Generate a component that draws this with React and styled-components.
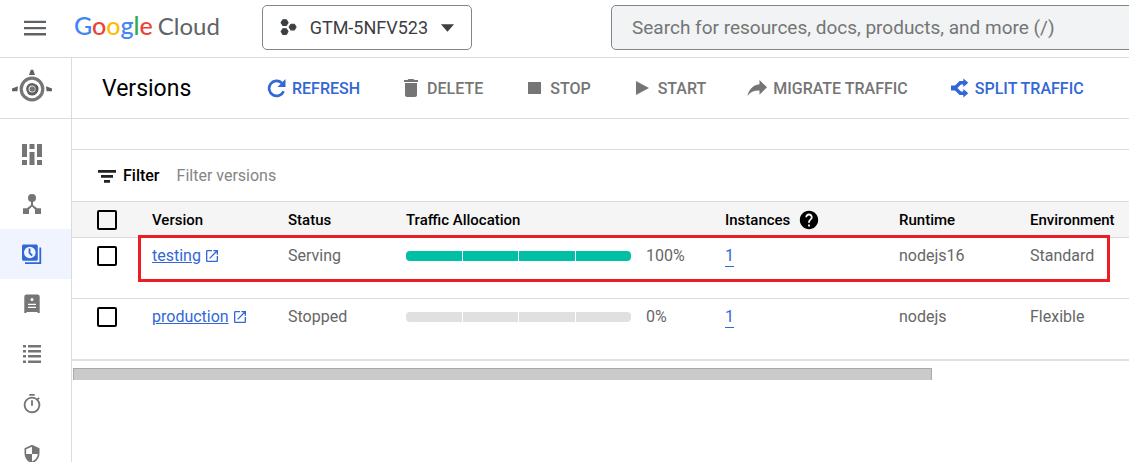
import React, { useState } from "react";
import styled, { createGlobalStyle } from "styled-components";
import {
  MdDelete,
  MdHelp,
  MdOpenInNew,
  MdOutlineTimer,
  MdSecurity,
} from "react-icons/md";

const GlobalStyle = createGlobalStyle`
  * {
    box-sizing: border-box;
  }
  body {
    margin: 0;
    background: #fff;
    font-family: Roboto, "Liberation Sans", sans-serif;
    font-size: 16px;
    color: #000;
  }
  button, input {
    font-family: inherit;
  }
`;

const Page = styled.div`
  display: flex;
  flex-direction: column;
  height: 100vh;
  overflow: hidden;
`;

const Header = styled.header`
  display: flex;
  flex: none;
  align-items: center;
  height: 58px;
  padding: 0 0 2px 23px;
  border-bottom: 1px solid #dadce0;
`;

const MenuButton = styled.button`
  display: flex;
  flex: none;
  padding: 0;
  border: 0;
  background: none;
  color: #5f6368;
  cursor: pointer;
`;

const Logo = styled.a`
  display: flex;
  flex: none;
  align-items: baseline;
  gap: 5px;
  width: 215px;
  padding: 0 0 4px 27px;
  font-family: Lato, Roboto, sans-serif;
  font-size: 24px;
  line-height: 32px;
  color: #5f6368;
  text-decoration: none;
`;

const Brand = styled.span`
  font-size: 25px;
  font-weight: 500;
`;

const Letter = styled.span`
  color: ${(props) => props.$color};
`;

const ProjectButton = styled.button`
  display: flex;
  flex: none;
  align-items: center;
  gap: 12px;
  width: 210px;
  height: 45px;
  padding: 0 16px;
  border: 1px solid #80868b;
  border-radius: 5px;
  background: #fff;
  font-size: 18px;
  color: #3c4043;
  white-space: nowrap;
  cursor: pointer;
`;

const SearchInput = styled.input`
  flex: 1 0 600px;
  height: 45px;
  margin-left: 139px;
  padding: 0 20px;
  border: 1px solid #80868b;
  border-radius: 5px;
  background: #f1f3f4;
  font-size: 19px;
  &::placeholder {
    color: #757575;
    opacity: 1;
  }
`;

const Body = styled.div`
  display: flex;
  flex: 1;
  min-height: 0;
`;

const Sidebar = styled.nav`
  display: flex;
  flex: none;
  flex-direction: column;
  width: 72px;
  overflow: hidden;
  border-right: 1px solid #dadce0;
`;

const Product = styled.div`
  display: flex;
  flex: none;
  align-items: center;
  justify-content: center;
  height: 61px;
  margin-bottom: 10px;
  padding: 2px 7px 0 0;
  border-bottom: 1px solid #dadce0;
`;

const NavLink = styled.a`
  display: flex;
  flex: none;
  align-items: center;
  justify-content: center;
  height: 50px;
  padding-right: 7px;
  background: ${(props) => (props.$active ? "#f0f4ff" : "transparent")};
  color: ${(props) => (props.$active ? "#3367d6" : "#757575")};
`;

const Main = styled.main`
  flex: 1;
  min-width: 0;
  overflow: hidden;
`;

const Toolbar = styled.div`
  display: flex;
  align-items: center;
  gap: 41px;
  height: 61px;
  padding-left: 30px;
  border-bottom: 1px solid #dadce0;
  white-space: nowrap;
`;

const Title = styled.h1`
  margin: 0;
  width: 123px;
  font-size: 23px;
  font-weight: 400;
`;

const ToolButton = styled.button`
  display: flex;
  align-items: center;
  gap: 6px;
  padding: 0;
  border: 0;
  background: none;
  font-size: 16px;
  font-weight: 500;
  color: ${(props) => (props.$primary ? "#3367d6" : "#757575")};
  cursor: pointer;
`;

const FilterBar = styled.div`
  display: flex;
  align-items: center;
  height: 52px;
  margin-top: 30px;
  padding-left: 25px;
  border-top: 1px solid #dadce0;
`;

const FilterLabel = styled.label`
  display: flex;
  align-items: center;
  gap: 6px;
  font-weight: 500;
`;

const FilterInput = styled.input`
  flex: 1;
  margin-left: 17px;
  padding: 0;
  border: 0;
  outline: 0;
  font-size: 16px;
  &::placeholder {
    color: #858585;
    opacity: 1;
  }
`;

const Table = styled.table`
  width: 100%;
  table-layout: fixed;
  border-collapse: separate;
  border-spacing: 0;
  border-bottom: 2px solid #e0e0e0;
  white-space: nowrap;
`;

const Col = styled.col`
  width: ${(props) => props.$width};
`;

const Th = styled.th`
  height: 37px;
  padding: 0;
  border: solid #dadce0;
  border-width: 1px 0;
  background: #f5f5f5;
  font-size: 15px;
  font-weight: 500;
  text-align: left;
`;

const Row = styled.tr`
  position: relative;
`;

const Td = styled.td`
  height: ${(props) => (props.$last ? "60px" : "61px")};
  padding: 8px 0 0;
  border-bottom: ${(props) => (props.$last ? "0" : "1px solid #dadce0")};
  vertical-align: top;
  line-height: 20px;
  color: #666;
`;

const RowOutline = styled.span`
  position: absolute;
  top: -3px;
  left: 66px;
  right: 19px;
  height: 47px;
  border: 3px solid #ed1c24;
  pointer-events: none;
`;

const Inline = styled.div`
  display: flex;
  align-items: center;
  gap: ${(props) => props.$gap};
`;

const CheckBox = styled.input`
  appearance: none;
  display: block;
  width: 20px;
  height: 20px;
  margin: 0 0 0 25px;
  border: 2px solid #000;
  border-radius: 2px;
  &:checked {
    background: #3367d6;
  }
`;

const VersionLink = styled.a`
  display: inline-flex;
  align-items: center;
  gap: 3px;
  color: #3367d6;
`;

const CountLink = styled.a`
  display: inline-block;
  border-bottom: 1px solid #3367d6;
  color: #3367d6;
  text-decoration: none;
`;

const Meter = styled.div`
  display: flex;
  gap: 1px;
  width: 225px;
  height: 10px;
  border-radius: 4px;
  overflow: hidden;
`;

const Segment = styled.span`
  flex: 1;
  background: ${(props) => (props.$filled ? "#00bfa5" : "#e0e0e0")};
`;

const ScrollTrack = styled.div`
  padding: 7px 0 0 1px;
`;

const ScrollThumb = styled.div`
  width: 81.3%;
  height: 12px;
  border: solid #a9a9a9;
  border-width: 1px 1px 0;
  background: #cacaca;
`;

const MenuIcon = () => (
  <svg width="24" height="24" viewBox="0 0 24 24" fill="#5f6368">
    <path d="M1 4.7h22V7H1zM1 10.9h22v2.300H1zM1 17.100h22v2.300H1z" />
  </svg>
);

const ProjectIcon = () => (
  <svg width="20" height="20" viewBox="0 0 20 20" fill="#3c4043">
    <path d="M4.200 1.200h3.600L9.700 4.200 7.800 7.200H4.200L2.300 4.200zM4.200 10.800h3.600l1.900 3-1.900 3H4.200l-1.900-3zM12.800 6h3.600l1.900 3-1.900 3h-3.600l-1.900-3z" stroke="#3c4043" strokeWidth="1.200" strokeLinejoin="round" />
  </svg>
);

const CaretIcon = () => (
  <svg width="16" height="8" viewBox="0 0 16 8" fill="#3c4043">
    <path d="M1 0h14L8 8z" />
  </svg>
);

const AppEngineIcon = () => (
  <svg width="40" height="40" viewBox="0 0 40 40">
    <path d="M18.800.800h2.400l1.800 5.200h-6zM6 17.300l-.6 5H0v-2.800zM34 17.300l.6 5H40v-2.800z" fill="#616161" />
    <circle cx="20" cy="20" r="10.800" fill="none" stroke="#757575" strokeWidth="3.200" />
    <path d="M15.500 24.600 24.600 15.500a6.400 6.400 0 1 1-9.100 9.100z" fill="#424242" />
    <circle cx="20" cy="20" r="4.700" fill="#e0e0e0" stroke="#616161" strokeWidth="2.400" />
    <circle cx="20.300" cy="20" r="2.600" fill="#757575" />
  </svg>
);

const DashboardIcon = () => (
  <svg width="20" height="22" viewBox="0 0 20 22" fill="currentColor">
    <path d="M0 1h5v13H0zM0 17h5v5H0zM7.500 1h5v5h-5zM7.500 9h5v13h-5zM15 1h5v13h-5zM15 17h5v5h-5z" />
  </svg>
);

const ServicesIcon = () => (
  <svg width="18" height="20" viewBox="0 0 18 20" fill="currentColor">
    <circle cx="9" cy="4" r="4" />
    <path d="M8 7h2v4l4 3.200h4V20h-6v-4.500l-3-3-3 3V20H0v-5.800h4L8 11z" />
  </svg>
);

const VersionsIcon = () => (
  <svg width="20" height="20" viewBox="0 0 20 20">
    <path d="M1.500.500h12.800c.8 0 1.500.7 1.500 1.500v13.200c0 .8-.7 1.500-1.500 1.500H1.500c-.8 0-1.500-.7-1.500-1.500V2C0 1.200.700.500 1.500.500zM17.400 3.500h1.800V20H3v-1.800h14.400z" fill="currentColor" />
    <circle cx="7.800" cy="8.500" r="5.800" fill="#f0f4ff" />
    <path d="M7.500 4.500v4.400l2.700 2.700" fill="none" stroke="currentColor" strokeWidth="1.800" />
  </svg>
);

const InstancesIcon = () => (
  <svg width="16" height="20" viewBox="0 0 16 20" fill="currentColor" fillRule="evenodd">
    <path d="M2.500 0.500h11A2.200 2.200 0 0 1 15.700 2.700V19h-2.200v-1h-11v1H.3V2.700A2.200 2.200 0 0 1 2.500.5zM8 4a1.500 1.500 0 1 0 0 3 1.500 1.500 0 0 0 0-3zM4 9.700v1.300h8V9.700zM4 12.800v1.300h8v-1.300z" />
  </svg>
);

const TaskIcon = () => (
  <svg width="18" height="18" viewBox="0 0 18 18" fill="currentColor">
    <path d="M0 0h3v2.500H0zM5 0h13v2.500H5zM0 5h3v2.500H0zM5 5h13v2.500H5zM0 10h3v2.500H0zM5 10h13v2.500H5zM0 15.500h3V18H0zM5 15.500h13V18H5z" />
  </svg>
);

const FilterIcon = () => (
  <svg width="20" height="20" viewBox="0 0 20 20" fill="#212121">
    <path d="M1 4h18v2.700H1zM4 9h12v2.700H4zM7 14h6v2.700H7z" />
  </svg>
);

const RefreshIcon = () => (
  <svg width="20" height="20" viewBox="0 0 20 20">
    <path d="M17.600 13.200A7.500 7.500 0 1 1 15.800 5" fill="none" stroke="currentColor" strokeWidth="2.700" />
    <path d="M19.500 1v8h-8z" fill="currentColor" />
  </svg>
);

const StopIcon = () => (
  <svg width="20" height="20" viewBox="0 0 20 20" fill="currentColor">
    <path d="M4 4h13v12H4z" />
  </svg>
);

const StartIcon = () => (
  <svg width="20" height="20" viewBox="0 0 20 20" fill="currentColor">
    <path d="M4 3v14l13-7z" />
  </svg>
);

const MigrateIcon = () => (
  <svg width="20" height="20" viewBox="0 0 20 20" fill="currentColor">
    <path d="M12.500 2 20 9.300l-7.500 7.400v-4.200C7 12.300 3.300 14 .5 18 1.600 12 5.600 7 12.500 6.200z" />
  </svg>
);

const SplitIcon = () => (
  <svg width="20" height="20" viewBox="0 0 20 20">
    <path d="M2 7.500h5v5H2z" fill="currentColor" />
    <path d="M6 10 11.300 4.700H15M6 10l5.300 5.300H15" fill="none" stroke="currentColor" strokeWidth="3.400" />
    <path d="M14.300.500 19.300 4.700l-5 4.200zM14.300 11.100l5 4.200-5 4.200z" fill="currentColor" />
  </svg>
);

const googleLetters = [
  ["G", "#4285f4"],
  ["o", "#ea4335"],
  ["o", "#fbbc04"],
  ["g", "#4285f4"],
  ["l", "#34a853"],
  ["e", "#ea4335"],
];

const navItems = [
  { name: "Dashboard", icon: <DashboardIcon /> },
  { name: "Services", icon: <ServicesIcon /> },
  { name: "Versions", icon: <VersionsIcon />, active: true },
  { name: "Instances", icon: <InstancesIcon /> },
  { name: "Task queues", icon: <TaskIcon /> },
  { name: "Cron jobs", icon: <MdOutlineTimer size={22} /> },
  { name: "Firewall rules", icon: <MdSecurity size={20} /> },
];

const actions = [
  { name: "REFRESH", icon: <RefreshIcon />, primary: true },
  { name: "DELETE", icon: <MdDelete size={20} viewBox="2 2 20 20" /> },
  { name: "STOP", icon: <StopIcon /> },
  { name: "START", icon: <StartIcon /> },
  { name: "MIGRATE TRAFFIC", icon: <MigrateIcon /> },
  { name: "SPLIT TRAFFIC", icon: <SplitIcon />, primary: true },
];

const versions = [
  { name: "testing", status: "Serving", traffic: 100, instances: 1, runtime: "nodejs16", environment: "Standard", marked: true },
  { name: "production", status: "Stopped", traffic: 0, instances: 1, runtime: "nodejs", environment: "Flexible" },
];

const TrafficMeter = ({ value }) => (
  <Inline $gap="15px">
    <Meter role="img" aria-label={`${value}% of traffic`}>
      {[0, 25, 50, 75].map((start) => (
        <Segment key={start} $filled={value > start} />
      ))}
    </Meter>
    {value}%
  </Inline>
);

const VersionRow = ({ version, last, checked, onToggle }) => (
  <Row>
    <Td $last={last}>
      <CheckBox
        type="checkbox"
        aria-label={`Select ${version.name}`}
        checked={checked}
        onChange={onToggle}
      />
      {version.marked && <RowOutline />}
    </Td>
    <Td $last={last}>
      <VersionLink href="#version">
        {version.name}
        <MdOpenInNew size={16} />
      </VersionLink>
    </Td>
    <Td $last={last}>{version.status}</Td>
    <Td $last={last}>
      <TrafficMeter value={version.traffic} />
    </Td>
    <Td $last={last}>
      <CountLink href="#instances">{version.instances}</CountLink>
    </Td>
    <Td $last={last}>{version.runtime}</Td>
    <Td $last={last}>{version.environment}</Td>
  </Row>
);

const App = () => {
  const [selected, setSelected] = useState([]);

  const toggle = (name) =>
    setSelected((prev) =>
      prev.includes(name) ? prev.filter((n) => n !== name) : [...prev, name]
    );

  const toggleAll = () =>
    setSelected(selected.length === versions.length ? [] : versions.map((v) => v.name));

  return (
    <Page>
      <GlobalStyle />
      <Header>
        <MenuButton aria-label="Navigation menu">
          <MenuIcon />
        </MenuButton>
        <Logo href="#home">
          <Brand>
            {googleLetters.map(([letter, color], i) => (
              <Letter key={i} $color={color}>{letter}</Letter>
            ))}
          </Brand>
          <span>Cloud</span>
        </Logo>
        <ProjectButton>
          <ProjectIcon />
          GTM-5NFV523
          <CaretIcon />
        </ProjectButton>
        <SearchInput
          type="search"
          aria-label="Search"
          placeholder="Search for resources, docs, products, and more (/)"
        />
      </Header>
      <Body>
        <Sidebar>
          <Product>
            <AppEngineIcon />
          </Product>
          {navItems.map((item) => (
            <NavLink key={item.name} href="#nav" aria-label={item.name} $active={item.active}>
              {item.icon}
            </NavLink>
          ))}
        </Sidebar>
        <Main>
          <Toolbar>
            <Title>Versions</Title>
            {actions.map((action) => (
              <ToolButton key={action.name} $primary={action.primary}>
                {action.icon}
                {action.name}
              </ToolButton>
            ))}
          </Toolbar>
          <FilterBar>
            <FilterLabel htmlFor="filter">
              <FilterIcon />
              Filter
            </FilterLabel>
            <FilterInput id="filter" type="text" placeholder="Filter versions" />
          </FilterBar>
          <Table>
            <colgroup>
              <Col $width="80px" />
              <Col $width="136px" />
              <Col $width="118px" />
              <Col $width="319px" />
              <Col $width="174px" />
              <Col $width="131px" />
              <Col $width="auto" />
            </colgroup>
            <thead>
              <tr>
                <Th>
                  <CheckBox
                    type="checkbox"
                    aria-label="Select all versions"
                    checked={selected.length === versions.length}
                    onChange={toggleAll}
                  />
                </Th>
                <Th>Version</Th>
                <Th>Status</Th>
                <Th>Traffic Allocation</Th>
                <Th>
                  <Inline $gap="8px">
                    Instances
                    <MdHelp size={22} />
                  </Inline>
                </Th>
                <Th>Runtime</Th>
                <Th>Environment</Th>
              </tr>
            </thead>
            <tbody>
              {versions.map((v, i) => (
                <VersionRow
                  key={v.name}
                  version={v}
                  last={i === versions.length - 1}
                  checked={selected.includes(v.name)}
                  onToggle={() => toggle(v.name)}
                />
              ))}
            </tbody>
          </Table>
          <ScrollTrack>
            <ScrollThumb />
          </ScrollTrack>
        </Main>
      </Body>
    </Page>
  );
};

export default App;
